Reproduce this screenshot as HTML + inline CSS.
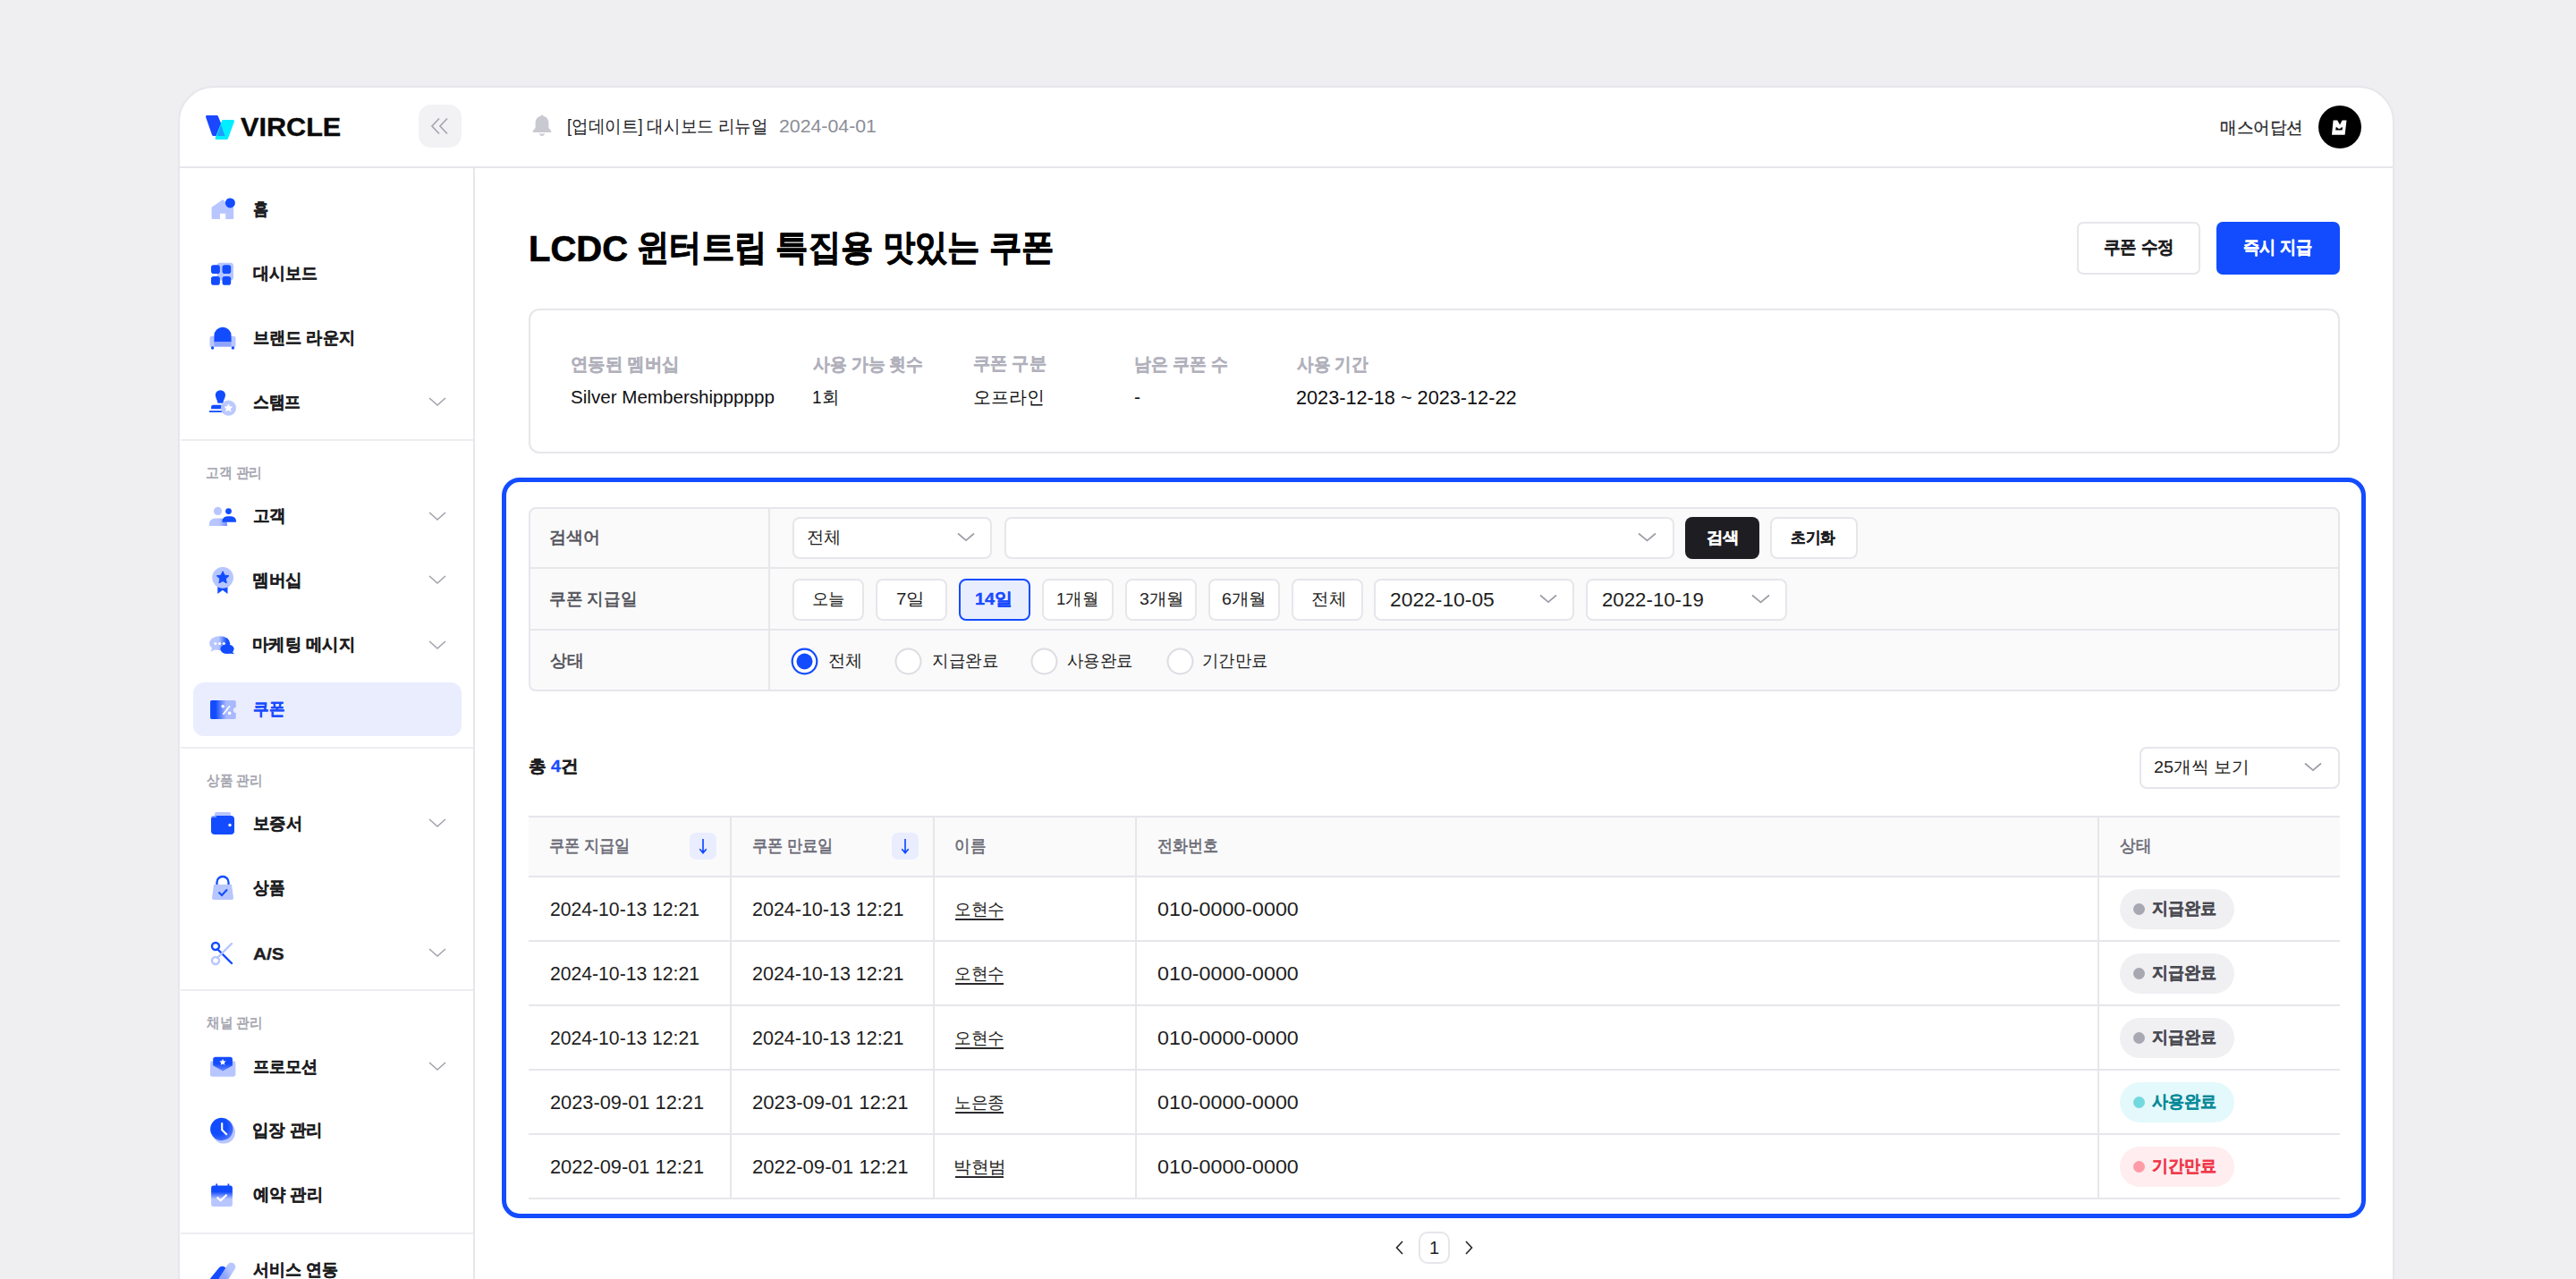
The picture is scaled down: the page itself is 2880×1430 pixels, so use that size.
<!DOCTYPE html>
<html><head><meta charset="utf-8"><title>VIRCLE</title>
<style>
html,body{margin:0;padding:0;}
body{width:2880px;height:1430px;overflow:hidden;position:relative;background:#efeff2;font-family:"Liberation Sans",sans-serif;}
.t{position:absolute;white-space:nowrap;line-height:1;transform-origin:0 0;}
</style></head><body>
<div style="position:absolute;left:199px;top:96px;width:2478px;height:1400px;background:#fff;border:2px solid #e6e6eb;border-radius:40px;box-sizing:border-box"></div>
<div style="position:absolute;left:201px;top:186px;width:2474px;height:2px;background:#e6e6eb"></div>
<div style="position:absolute;left:529px;top:188px;width:2px;height:1300px;background:#e6e6eb"></div>
<svg style="position:absolute;left:226px;top:125px" width="40" height="36" viewBox="0 0 40 36"><polygon points="5.5,5.5 16.5,5.5 24.5,25.5 12.5,25.5" fill="#1a47ff" stroke="#1a47ff" stroke-width="3" stroke-linejoin="round"/>
<polygon points="23.5,10.5 34.5,10.5 27.5,29.5 16,29.5" fill="#00eeff" stroke="#00eeff" stroke-width="3" stroke-linejoin="round"/>
<polygon points="21,14.5 25.5,27 16.8,27" fill="#1f9dff"/></svg>
<div style="position:absolute;left:468px;top:117px;width:48px;height:48px;background:#f2f2f5;border-radius:14px"></div>
<svg style="position:absolute;left:480px;top:129px" width="24" height="24" viewBox="0 0 24 24"><path d="M11 3.5 L3 12 L11 20.5 M20 3.5 L12 12 L20 20.5" fill="none" stroke="#a6a6b1" stroke-width="1.7"/></svg>
<svg style="position:absolute;left:593px;top:126px" width="26" height="29" viewBox="0 0 26 29"><g transform="translate(1 0.5) scale(1.0 1.02)"><path d="M12 2c-.9 0-1.4.6-1.5 1.3C6.8 4.2 4.6 7.2 4.6 11v5.2L1.9 19.3c-.6.7-.1 1.9.9 1.9h18.4c1 0 1.5-1.2.9-1.9L19.4 16.2V11c0-3.8-2.2-6.8-5.9-7.7C13.4 2.6 12.9 2 12 2z" fill="#c9c9d2"/><path d="M8.8 22.6c.5 1.5 1.7 2.4 3.2 2.4s2.7-.9 3.2-2.4z" fill="#c9c9d2"/></g></svg>
<div style="position:absolute;left:2592px;top:118px;width:48px;height:48px;background:#000;border-radius:50%"></div>
<svg style="position:absolute;left:2606px;top:133px" width="20" height="20" viewBox="0 0 20 20"><path d="M2.6 1.5 L7.2 1.5 L10 6.5 L12.6 1.5 L17.5 1.5 L15.6 17.8 L1 17.8 Z" fill="#fff"/><path d="M5.6 9.2 L6.6 9.2 Q9.3 12.6 12 9.2 L13 9.2 L12.6 12.6 L5.2 12.6 Z" fill="#000"/></svg>
<div style="position:absolute;left:202px;top:491px;width:327px;height:2px;background:#ededf1"></div>
<div style="position:absolute;left:202px;top:835px;width:327px;height:2px;background:#ededf1"></div>
<div style="position:absolute;left:202px;top:1106px;width:327px;height:2px;background:#ededf1"></div>
<div style="position:absolute;left:202px;top:1378px;width:327px;height:2px;background:#ededf1"></div>
<div style="position:absolute;left:216px;top:763px;width:300px;height:60px;background:#e9edfe;border-radius:12px"></div>
<svg style="position:absolute;left:478px;top:442px" width="22" height="14" viewBox="0 0 22 14"><path d="M2 3 L11 11 L20 3" fill="none" stroke="#a3a3ae" stroke-width="1.6"/></svg>
<svg style="position:absolute;left:478px;top:569.5px" width="22" height="14" viewBox="0 0 22 14"><path d="M2 3 L11 11 L20 3" fill="none" stroke="#a3a3ae" stroke-width="1.6"/></svg>
<svg style="position:absolute;left:478px;top:641px" width="22" height="14" viewBox="0 0 22 14"><path d="M2 3 L11 11 L20 3" fill="none" stroke="#a3a3ae" stroke-width="1.6"/></svg>
<svg style="position:absolute;left:478px;top:713.5px" width="22" height="14" viewBox="0 0 22 14"><path d="M2 3 L11 11 L20 3" fill="none" stroke="#a3a3ae" stroke-width="1.6"/></svg>
<svg style="position:absolute;left:478px;top:913px" width="22" height="14" viewBox="0 0 22 14"><path d="M2 3 L11 11 L20 3" fill="none" stroke="#a3a3ae" stroke-width="1.6"/></svg>
<svg style="position:absolute;left:478px;top:1058px" width="22" height="14" viewBox="0 0 22 14"><path d="M2 3 L11 11 L20 3" fill="none" stroke="#a3a3ae" stroke-width="1.6"/></svg>
<svg style="position:absolute;left:478px;top:1185px" width="22" height="14" viewBox="0 0 22 14"><path d="M2 3 L11 11 L20 3" fill="none" stroke="#a3a3ae" stroke-width="1.6"/></svg>
<svg style="position:absolute;left:234px;top:219px" width="30" height="30" viewBox="0 0 30 30"><path d="M2.6 12.8 L14.9 4.2 L27.2 12.8 V25 a1 1 0 0 1 -1 1 H18.2 V19.7 H11.9 V26 H3.6 a1 1 0 0 1 -1 -1Z" fill="#b8c6ff"/><circle cx="23.4" cy="7.9" r="5.5" fill="#134cff"/></svg>
<svg style="position:absolute;left:234px;top:292px" width="30" height="30" viewBox="0 0 30 30"><rect x="8.5" y="1.7" width="18.5" height="19.8" rx="3.5" fill="#b8c6ff"/><rect x="2" y="4.3" width="9.9" height="9.7" rx="2.8" fill="#134cff"/><rect x="14.5" y="4.3" width="9.7" height="9.7" rx="2.8" fill="#134cff"/><rect x="2" y="16.9" width="9.9" height="9.8" rx="2.8" fill="#134cff"/><rect x="14.5" y="16.9" width="9.7" height="9.8" rx="2.8" fill="#134cff"/></svg>
<svg style="position:absolute;left:234px;top:364px" width="30" height="30" viewBox="0 0 30 30"><rect x="0.5" y="11.7" width="6" height="12.5" rx="2.5" fill="#b8c6ff"/><rect x="23.5" y="11.7" width="6" height="12.5" rx="2.5" fill="#b8c6ff"/><path d="M5.4 11.4 a9.6 9.6 0 0 1 19.2 0 V18.5 H5.4Z" fill="#134cff"/><rect x="5.5" y="18.2" width="19" height="5.5" fill="#8ea4ff"/><circle cx="3.6" cy="25" r="1.7" fill="#134cff"/><circle cx="26.4" cy="25" r="1.7" fill="#134cff"/></svg>
<svg style="position:absolute;left:234px;top:435px" width="30" height="30" viewBox="0 0 30 30"><path d="M12.4 1.2 a5.6 5.6 0 0 1 5.6 5.6 c0 3 -2.2 5 -2.6 9 H9.4 c-.4 -4 -2.6 -6 -2.6 -9 a5.6 5.6 0 0 1 5.6 -5.6z" fill="#134cff"/><path d="M4.5 17.7 H17 V22.3 H2.1 V20 a2.3 2.3 0 0 1 2.4 -2.3z" fill="#134cff"/><rect x="-0.2" y="24.2" width="16" height="1.8" fill="#134cff"/><circle cx="21.4" cy="21.2" r="8.6" fill="#b8c6ff" opacity="0.95"/><path d="M21.4 16.2 l1.5 3.1 3.4 .4 -2.5 2.3 .7 3.4 -3.1-1.7 -3.1 1.7 .7-3.4 -2.5-2.3 3.4-.4z" fill="#fff"/></svg>
<svg style="position:absolute;left:234px;top:562px" width="30" height="30" viewBox="0 0 30 30"><defs><linearGradient id="pg" x1="0" x2="1"><stop offset="0.55" stop-color="#b8c6ff"/><stop offset="1" stop-color="#6f8bff"/></linearGradient></defs><circle cx="9.5" cy="9.4" r="4.6" fill="#b8c6ff"/><path d="M-0.1 26 V24 a6.6 6.6 0 0 1 6.6 -6.6 H13.4 a6.6 6.6 0 0 1 6.6 6.6 V26Z" fill="url(#pg)"/><circle cx="21.5" cy="9.6" r="3.4" fill="#134cff"/><path d="M14.5 21.7 V20.5 a5.3 5.3 0 0 1 5.3 -5.3 H24.7 a5.3 5.3 0 0 1 5.3 5.3 V21.7Z" fill="#134cff"/></svg>
<svg style="position:absolute;left:234px;top:634px" width="30" height="30" viewBox="0 0 30 30"><path d="M9.3 20 H20.5 V30 L14.9 25.8 L9.3 30Z" fill="#134cff"/><circle cx="15.1" cy="11.8" r="11.9" fill="#b8c6ff"/><path d="M15.1 4.8 l2.1 4.4 4.7 .6 -3.5 3.3 .9 4.8 -4.2-2.3 -4.2 2.3 .9-4.8 -3.5-3.3 4.7-.6z" fill="#134cff" stroke="#134cff" stroke-width="1" stroke-linejoin="round"/></svg>
<svg style="position:absolute;left:234px;top:706px" width="30" height="30" viewBox="0 0 30 30"><defs><linearGradient id="mg" x1="0" x2="1"><stop offset="0.45" stop-color="#b8c6ff"/><stop offset="0.85" stop-color="#134cff"/></linearGradient></defs><path d="M1.5 22.5 L3.5 17.5 L8 20Z" fill="#b8c6ff"/><ellipse cx="11.7" cy="13.2" rx="11.5" ry="8" fill="url(#mg)"/><ellipse cx="20" cy="19.6" rx="7.6" ry="5.4" fill="#134cff"/><path d="M25 22 L28 25.3 L22 24.5Z" fill="#134cff"/><circle cx="6.8" cy="13.5" r="1.5" fill="#fff"/><circle cx="11.6" cy="13.5" r="1.5" fill="#fff"/><circle cx="16.3" cy="13.5" r="1.5" fill="#fff"/></svg>
<svg style="position:absolute;left:234px;top:779px" width="30" height="30" viewBox="0 0 30 30"><defs><linearGradient id="cg" x1="0" x2="1"><stop offset="0.2" stop-color="#134cff"/><stop offset="0.62" stop-color="#a9b9ff"/></linearGradient></defs><path d="M3.2 4.1 H27.8 a2 2 0 0 1 2 2 V12 a3 3 0 0 0 0 6 V23 a2 2 0 0 1 -2 2 H3.2 a2 2 0 0 1 -2 -2 V6.1 a2 2 0 0 1 2 -2Z" fill="url(#cg)"/><rect x="1.2" y="4.1" width="6.1" height="20.9" rx="2" fill="#134cff"/><path d="M15.8 19.2 L22.6 10.8" stroke="#fff" stroke-width="1.7" stroke-linecap="round"/><circle cx="15.2" cy="10.7" r="1.8" fill="#fff"/><circle cx="22.6" cy="18.4" r="1.8" fill="#fff"/></svg>
<svg style="position:absolute;left:234px;top:906px" width="30" height="30" viewBox="0 0 30 30"><rect x="6" y="2" width="18" height="8" rx="2" fill="#b8c6ff"/><rect x="2" y="6" width="26" height="21" rx="4" fill="#134cff"/><rect x="2" y="6" width="6" height="2" fill="#b8c6ff" opacity="0.6"/><circle cx="23" cy="16.5" r="1.7" fill="#fff"/></svg>
<svg style="position:absolute;left:234px;top:978px" width="30" height="30" viewBox="0 0 30 30"><path d="M8.5 13 V8.5 a6.5 6.5 0 0 1 13 0 V13" fill="none" stroke="#134cff" stroke-width="2.3"/><path d="M5 11 H25 L27 26 a2 2 0 0 1 -2 2 H5 a2 2 0 0 1 -2 -2Z" fill="#b8c6ff"/><path d="M10.5 19.5 L14 23 L20 16.5" fill="none" stroke="#134cff" stroke-width="2.1"/></svg>
<svg style="position:absolute;left:234px;top:1051px" width="30" height="30" viewBox="0 0 30 30"><path d="M9 10 L25 26" stroke="#134cff" stroke-width="2.4" stroke-linecap="round"/><path d="M9 20 L25 4" stroke="#b8c6ff" stroke-width="2.4" stroke-linecap="round"/><circle cx="7" cy="7" r="4" fill="none" stroke="#134cff" stroke-width="2.4"/><circle cx="7" cy="23" r="4" fill="none" stroke="#b8c6ff" stroke-width="2.4"/></svg>
<svg style="position:absolute;left:234px;top:1178px" width="30" height="30" viewBox="0 0 30 30"><defs><linearGradient id="eg" x1="0" y1="0" x2="0" y2="1"><stop offset="0.45" stop-color="#134cff"/><stop offset="1" stop-color="#7d95ff"/></linearGradient></defs><rect x="1.1" y="8.3" width="28.1" height="17.2" rx="2" fill="#b8c6ff"/><rect x="4.2" y="3.8" width="21.7" height="17" rx="2.5" fill="url(#eg)"/><path d="M1.1 11.5 L15.15 19.5 L29.2 11.5 V23.5 a2 2 0 0 1 -2 2 H3.1 a2 2 0 0 1 -2 -2Z" fill="#b8c6ff"/><path d="M15 6 l1.1 2.3 2.5 .3 -1.8 1.7 .5 2.5 -2.3-1.3 -2.3 1.3 .5-2.5 -1.8-1.7 2.5-.3z" fill="#fff"/></svg>
<svg style="position:absolute;left:234px;top:1249px" width="30" height="30" viewBox="0 0 30 30"><defs><radialGradient id="kg" cx="0.35" cy="0.35" r="0.8"><stop offset="0.5" stop-color="#134cff"/><stop offset="1" stop-color="#5f7fff"/></radialGradient></defs><circle cx="16.3" cy="16.9" r="12.7" fill="#b8c6ff"/><circle cx="13.8" cy="13.5" r="12.7" fill="url(#kg)"/><path d="M14.2 7 V14.2 L19.2 19.2" fill="none" stroke="#fff" stroke-width="2.1" stroke-linecap="round"/></svg>
<svg style="position:absolute;left:234px;top:1321px" width="30" height="30" viewBox="0 0 30 30"><defs><linearGradient id="lg" x1="0" y1="0" x2="0" y2="1"><stop offset="0.3" stop-color="#134cff"/><stop offset="0.65" stop-color="#b8c6ff"/></linearGradient></defs><rect x="2.1" y="4.5" width="23.8" height="23.4" rx="2.5" fill="url(#lg)"/><rect x="7.3" y="2.5" width="1.8" height="4" fill="#134cff"/><rect x="20.5" y="2.5" width="1.8" height="4" fill="#134cff"/><path d="M8.6 17.5 L12.6 21.2 L19.6 14.8" fill="none" stroke="#fff" stroke-width="2.2"/></svg>
<svg style="position:absolute;left:234px;top:1405px" width="30" height="30" viewBox="0 0 30 30"><defs><linearGradient id="sg" x1="0" y1="1" x2="1" y2="0"><stop offset="0.2" stop-color="#8da3ff"/><stop offset="0.8" stop-color="#b8c6ff"/></linearGradient></defs><path d="M5.5 26.5 L14.5 15.5" stroke="#134cff" stroke-width="9.5" stroke-linecap="round"/><path d="M15.5 25.5 L24.5 11.5" stroke="url(#sg)" stroke-width="9.5" stroke-linecap="round"/></svg>
<div style="position:absolute;left:2322px;top:248px;width:138px;height:59px;background:#fff;border:2px solid #e6e6eb;border-radius:7px;box-sizing:border-box"></div>
<div style="position:absolute;left:2478px;top:248px;width:138px;height:59px;background:#134cff;border-radius:7px"></div>
<div style="position:absolute;left:591px;top:345px;width:2025px;height:162px;border:2px solid #e6e6eb;border-radius:12px;box-sizing:border-box"></div>
<div style="position:absolute;left:561px;top:534px;width:2084px;height:828px;border:5px solid #134cff;border-radius:20px;box-sizing:border-box"></div>
<div style="position:absolute;left:591px;top:567px;width:2025px;height:206px;background:#fafafb;border:2px solid #e6e6eb;border-radius:8px;box-sizing:border-box"></div>
<div style="position:absolute;left:593px;top:634px;width:2021px;height:2px;background:#e6e6eb"></div>
<div style="position:absolute;left:593px;top:703px;width:2021px;height:2px;background:#e6e6eb"></div>
<div style="position:absolute;left:859px;top:569px;width:2px;height:202px;background:#e6e6eb"></div>
<div style="position:absolute;left:886px;top:578px;width:223px;height:47px;background:#fff;border:2px solid #e6e6eb;border-radius:8px;box-sizing:border-box"></div>
<div style="position:absolute;left:1123px;top:578px;width:749px;height:47px;background:#fff;border:2px solid #e6e6eb;border-radius:8px;box-sizing:border-box"></div>
<div style="position:absolute;left:1884px;top:578px;width:83px;height:47px;background:#1e1e22;border-radius:8px"></div>
<div style="position:absolute;left:1979px;top:578px;width:98px;height:47px;background:#fff;border:2px solid #e6e6eb;border-radius:8px;box-sizing:border-box"></div>
<div style="position:absolute;left:886px;top:647px;width:80px;height:47px;background:#fff;border:2px solid #e6e6eb;border-radius:8px;box-sizing:border-box"></div>
<div style="position:absolute;left:979px;top:647px;width:80px;height:47px;background:#fff;border:2px solid #e6e6eb;border-radius:8px;box-sizing:border-box"></div>
<div style="position:absolute;left:1072px;top:647px;width:80px;height:47px;background:#e9eefe;border:2px solid #134cff;border-radius:8px;box-sizing:border-box"></div>
<div style="position:absolute;left:1165px;top:647px;width:80px;height:47px;background:#fff;border:2px solid #e6e6eb;border-radius:8px;box-sizing:border-box"></div>
<div style="position:absolute;left:1258px;top:647px;width:80px;height:47px;background:#fff;border:2px solid #e6e6eb;border-radius:8px;box-sizing:border-box"></div>
<div style="position:absolute;left:1351px;top:647px;width:80px;height:47px;background:#fff;border:2px solid #e6e6eb;border-radius:8px;box-sizing:border-box"></div>
<div style="position:absolute;left:1444px;top:647px;width:80px;height:47px;background:#fff;border:2px solid #e6e6eb;border-radius:8px;box-sizing:border-box"></div>
<div style="position:absolute;left:1536px;top:647px;width:224px;height:47px;background:#fff;border:2px solid #e6e6eb;border-radius:8px;box-sizing:border-box"></div>
<div style="position:absolute;left:1773px;top:647px;width:225px;height:47px;background:#fff;border:2px solid #e6e6eb;border-radius:8px;box-sizing:border-box"></div>
<svg style="position:absolute;left:1070px;top:594px" width="20" height="14" viewBox="0 0 20 14"><path d="M1 2.5 L10.0 10.059999999999999 L19 2.5" fill="none" stroke="#9d9da8" stroke-width="1.7"/></svg>
<svg style="position:absolute;left:1831px;top:594px" width="21" height="14" viewBox="0 0 21 14"><path d="M1 2.5 L10.5 10.48 L20 2.5" fill="none" stroke="#9d9da8" stroke-width="1.7"/></svg>
<svg style="position:absolute;left:1721px;top:663px" width="20" height="14" viewBox="0 0 20 14"><path d="M1 2.5 L10.0 10.059999999999999 L19 2.5" fill="none" stroke="#9d9da8" stroke-width="1.7"/></svg>
<svg style="position:absolute;left:1957.5px;top:663px" width="21" height="14" viewBox="0 0 21 14"><path d="M1 2.5 L10.5 10.48 L20 2.5" fill="none" stroke="#9d9da8" stroke-width="1.7"/></svg>
<svg style="position:absolute;left:884px;top:724px" width="31" height="31" viewBox="0 0 31 31"><circle cx="15.5" cy="15.5" r="13.8" fill="#fff" stroke="#134cff" stroke-width="2.2"/><circle cx="15.5" cy="15.5" r="9" fill="#134cff"/></svg>
<svg style="position:absolute;left:1000px;top:724px" width="31" height="31" viewBox="0 0 31 31"><circle cx="15.5" cy="15.5" r="14" fill="#fff" stroke="#dcdce2" stroke-width="2"/></svg>
<svg style="position:absolute;left:1152px;top:724px" width="31" height="31" viewBox="0 0 31 31"><circle cx="15.5" cy="15.5" r="14" fill="#fff" stroke="#dcdce2" stroke-width="2"/></svg>
<svg style="position:absolute;left:1303.5px;top:724px" width="31" height="31" viewBox="0 0 31 31"><circle cx="15.5" cy="15.5" r="14" fill="#fff" stroke="#dcdce2" stroke-width="2"/></svg>
<div style="position:absolute;left:2392px;top:835px;width:224px;height:47px;background:#fff;border:2px solid #e6e6eb;border-radius:8px;box-sizing:border-box"></div>
<svg style="position:absolute;left:2576px;top:851px" width="20" height="14" viewBox="0 0 20 14"><path d="M1 2.5 L10.0 10.059999999999999 L19 2.5" fill="none" stroke="#9d9da8" stroke-width="1.7"/></svg>
<div style="position:absolute;left:591px;top:913px;width:2025px;height:67px;background:#fafafb"></div>
<div style="position:absolute;left:591px;top:912px;width:2025px;height:2px;background:#e6e6eb"></div>
<div style="position:absolute;left:591px;top:979px;width:2025px;height:2px;background:#e6e6eb"></div>
<div style="position:absolute;left:591px;top:1051px;width:2025px;height:2px;background:#e6e6eb"></div>
<div style="position:absolute;left:591px;top:1123px;width:2025px;height:2px;background:#e6e6eb"></div>
<div style="position:absolute;left:591px;top:1195px;width:2025px;height:2px;background:#e6e6eb"></div>
<div style="position:absolute;left:591px;top:1267px;width:2025px;height:2px;background:#e6e6eb"></div>
<div style="position:absolute;left:591px;top:1339px;width:2025px;height:2px;background:#e6e6eb"></div>
<div style="position:absolute;left:815.5px;top:914px;width:2px;height:426px;background:#e6e6eb"></div>
<div style="position:absolute;left:1042.5px;top:914px;width:2px;height:426px;background:#e6e6eb"></div>
<div style="position:absolute;left:1269px;top:914px;width:2px;height:426px;background:#e6e6eb"></div>
<div style="position:absolute;left:2344.5px;top:914px;width:2px;height:426px;background:#e6e6eb"></div>
<div style="position:absolute;left:771px;top:931px;width:30px;height:30px;background:#e9edfe;border-radius:7px"></div>
<svg style="position:absolute;left:771px;top:931px" width="30" height="30" viewBox="0 0 30 30"><path d="M15 7 V22.5 M11.3 18.3 L15 22.6 L18.7 18.3" fill="none" stroke="#134cff" stroke-width="1.7"/></svg>
<div style="position:absolute;left:997px;top:931px;width:30px;height:30px;background:#e9edfe;border-radius:7px"></div>
<svg style="position:absolute;left:997px;top:931px" width="30" height="30" viewBox="0 0 30 30"><path d="M15 7 V22.5 M11.3 18.3 L15 22.6 L18.7 18.3" fill="none" stroke="#134cff" stroke-width="1.7"/></svg>
<div style="position:absolute;left:2370px;top:994px;width:128px;height:45px;background:#f0f0f3;border-radius:23px"></div>
<div style="position:absolute;left:2384.5px;top:1010px;width:13px;height:13px;background:#a8a8b2;border-radius:50%"></div>
<div style="position:absolute;left:1068px;top:1027px;width:54px;height:2px;background:#2a2a2e"></div>
<div style="position:absolute;left:2370px;top:1066px;width:128px;height:45px;background:#f0f0f3;border-radius:23px"></div>
<div style="position:absolute;left:2384.5px;top:1082px;width:13px;height:13px;background:#a8a8b2;border-radius:50%"></div>
<div style="position:absolute;left:1068px;top:1099px;width:54px;height:2px;background:#2a2a2e"></div>
<div style="position:absolute;left:2370px;top:1138px;width:128px;height:45px;background:#f0f0f3;border-radius:23px"></div>
<div style="position:absolute;left:2384.5px;top:1154px;width:13px;height:13px;background:#a8a8b2;border-radius:50%"></div>
<div style="position:absolute;left:1068px;top:1171px;width:54px;height:2px;background:#2a2a2e"></div>
<div style="position:absolute;left:2370px;top:1210px;width:128px;height:45px;background:#e4f9fb;border-radius:23px"></div>
<div style="position:absolute;left:2384.5px;top:1226px;width:13px;height:13px;background:#72d9df;border-radius:50%"></div>
<div style="position:absolute;left:1068px;top:1243px;width:54px;height:2px;background:#2a2a2e"></div>
<div style="position:absolute;left:2370px;top:1282px;width:128px;height:45px;background:#ffedef;border-radius:23px"></div>
<div style="position:absolute;left:2384.5px;top:1298px;width:13px;height:13px;background:#ff9ba6;border-radius:50%"></div>
<div style="position:absolute;left:1068px;top:1315px;width:54px;height:2px;background:#2a2a2e"></div>
<svg style="position:absolute;left:1557px;top:1385px" width="16" height="20" viewBox="0 0 16 20"><path d="M11 3 L4.5 10 L11 17" fill="none" stroke="#26262a" stroke-width="1.6"/></svg>
<svg style="position:absolute;left:1635px;top:1385px" width="16" height="20" viewBox="0 0 16 20"><path d="M4 3 L10.5 10 L4 17" fill="none" stroke="#26262a" stroke-width="1.6"/></svg>
<div style="position:absolute;left:1586px;top:1377px;width:35px;height:36px;border:2px solid #e6e6eb;border-radius:10px;box-sizing:border-box"></div>
<div class="t" style="left:268.7px;top:128.2px;font-size:29.0px;font-weight:700;transform:scaleX(1.0557);color:#0a0a0a;-webkit-text-stroke:0.35px currentColor">VIRCLE</div>
<div class="t" style="left:633.7px;top:131.7px;font-size:19.5px;font-weight:400;transform:scaleX(0.9293);color:#222226;">[업데이트] 대시보드 리뉴얼</div>
<div class="t" style="left:870.9px;top:131.2px;font-size:20.0px;font-weight:400;transform:scaleX(1.0644);color:#8c8c97;">2024-04-01</div>
<div class="t" style="left:2482.0px;top:134.0px;font-size:18.5px;font-weight:400;transform:scaleX(0.9783);color:#2a2a2e;-webkit-text-stroke:0.3px currentColor">매스어답션</div>
<div class="t" style="left:282.5px;top:224.5px;font-size:18.5px;font-weight:700;transform:scaleX(0.9);color:#1e1e22;-webkit-text-stroke:0.35px currentColor">홈</div>
<div class="t" style="left:282.5px;top:297.0px;font-size:18.5px;font-weight:700;transform:scaleX(0.9434);color:#1e1e22;-webkit-text-stroke:0.35px currentColor">대시보드</div>
<div class="t" style="left:282.5px;top:369.0px;font-size:18.5px;font-weight:700;transform:scaleX(0.9564);color:#1e1e22;-webkit-text-stroke:0.35px currentColor">브랜드 라운지</div>
<div class="t" style="left:282.5px;top:440.5px;font-size:18.5px;font-weight:700;transform:scaleX(0.9333);color:#1e1e22;-webkit-text-stroke:0.35px currentColor">스탬프</div>
<div class="t" style="left:282.5px;top:568.0px;font-size:18.5px;font-weight:700;transform:scaleX(0.9722);color:#1e1e22;-webkit-text-stroke:0.35px currentColor">고객</div>
<div class="t" style="left:281.5px;top:639.5px;font-size:18.5px;font-weight:700;transform:scaleX(0.9815);color:#1e1e22;-webkit-text-stroke:0.35px currentColor">멤버십</div>
<div class="t" style="left:281.5px;top:712.0px;font-size:18.5px;font-weight:700;transform:scaleX(0.9655);color:#1e1e22;-webkit-text-stroke:0.35px currentColor">마케팅 메시지</div>
<div class="t" style="left:282.5px;top:911.5px;font-size:18.5px;font-weight:700;transform:scaleX(0.9655);color:#1e1e22;-webkit-text-stroke:0.35px currentColor">보증서</div>
<div class="t" style="left:282.5px;top:983.5px;font-size:18.5px;font-weight:700;transform:scaleX(0.9237);color:#1e1e22;-webkit-text-stroke:0.35px currentColor">상품</div>
<div class="t" style="left:281.5px;top:1254.5px;font-size:18.5px;font-weight:700;transform:scaleX(0.9731);color:#1e1e22;-webkit-text-stroke:0.35px currentColor">입장 관리</div>
<div class="t" style="left:282.5px;top:1326.5px;font-size:18.5px;font-weight:700;transform:scaleX(0.9608);color:#1e1e22;-webkit-text-stroke:0.35px currentColor">예약 관리</div>
<div class="t" style="left:282.5px;top:1184.0px;font-size:18.5px;font-weight:700;transform:scaleX(0.9533);color:#1e1e22;-webkit-text-stroke:0.35px currentColor">프로모션</div>
<div class="t" style="left:282.5px;top:1410.5px;font-size:18.5px;font-weight:700;transform:scaleX(0.945);color:#1e1e22;-webkit-text-stroke:0.35px currentColor">서비스 연동</div>
<div class="t" style="left:282.5px;top:1056.5px;font-size:19.0px;font-weight:700;transform:scaleX(1.0969);color:#1e1e22;-webkit-text-stroke:0.35px currentColor">A/S</div>
<div class="t" style="left:282.5px;top:784.2px;font-size:18.5px;font-weight:700;transform:scaleX(0.9211);color:#1a4bff;-webkit-text-stroke:0.35px currentColor">쿠폰</div>
<div class="t" style="left:230.1px;top:521.0px;font-size:15.5px;font-weight:400;transform:scaleX(0.9231);color:#a4a4af;-webkit-text-stroke:0.6px currentColor">고객 관리</div>
<div class="t" style="left:231.0px;top:865.0px;font-size:15.5px;font-weight:400;transform:scaleX(0.9091);color:#a4a4af;-webkit-text-stroke:0.6px currentColor">상품 관리</div>
<div class="t" style="left:231.0px;top:1136.4px;font-size:15.5px;font-weight:400;transform:scaleX(0.9091);color:#a4a4af;-webkit-text-stroke:0.6px currentColor">채널 관리</div>
<div class="t" style="left:591.3px;top:257.7px;font-size:41.0px;font-weight:700;transform:scaleX(0.9748);color:#000000;-webkit-text-stroke:0.7px currentColor">LCDC</div>
<div class="t" style="left:712.1px;top:255.7px;font-size:40.0px;font-weight:700;transform:scaleX(0.9086);color:#000000;-webkit-text-stroke:0.7px currentColor">윈터트립 특집용 맛있는 쿠폰</div>
<div class="t" style="left:2351.7px;top:267.2px;font-size:19.5px;font-weight:700;transform:scaleX(0.9232);color:#1e1e22;-webkit-text-stroke:0.35px currentColor">쿠폰 수정</div>
<div class="t" style="left:2507.5px;top:267.2px;font-size:19.5px;font-weight:700;transform:scaleX(0.9095);color:#ffffff;-webkit-text-stroke:0.35px currentColor">즉시 지급</div>
<div class="t" style="left:638.4px;top:397.7px;font-size:19.5px;font-weight:700;transform:scaleX(0.9705);color:#b1b1bc;-webkit-text-stroke:0.35px currentColor">연동된 멤버십</div>
<div class="t" style="left:909.2px;top:397.7px;font-size:19.5px;font-weight:700;transform:scaleX(0.9412);color:#b1b1bc;-webkit-text-stroke:0.35px currentColor">사용 가능 횟수</div>
<div class="t" style="left:1088.0px;top:397.2px;font-size:19.5px;font-weight:700;transform:scaleX(0.956);color:#b1b1bc;-webkit-text-stroke:0.35px currentColor">쿠폰 구분</div>
<div class="t" style="left:1268.4px;top:397.7px;font-size:19.5px;font-weight:700;transform:scaleX(0.9418);color:#b1b1bc;-webkit-text-stroke:0.35px currentColor">남은 쿠폰 수</div>
<div class="t" style="left:1449.6px;top:397.7px;font-size:19.5px;font-weight:700;transform:scaleX(0.9267);color:#b1b1bc;-webkit-text-stroke:0.35px currentColor">사용 기간</div>
<div class="t" style="left:638.4px;top:434.3px;font-size:20.0px;font-weight:400;transform:scaleX(1.03);color:#0f0f12;">Silver Membershipppppp</div>
<div class="t" style="left:908.2px;top:434.5px;font-size:19.5px;font-weight:400;transform:scaleX(0.9704);color:#0f0f12;">1회</div>
<div class="t" style="left:1088.0px;top:434.5px;font-size:19.5px;font-weight:400;transform:scaleX(0.9961);color:#0f0f12;">오프라인</div>
<div class="t" style="left:1268.0px;top:432.5px;font-size:21.0px;font-weight:400;transform:scaleX(1.0);color:#0f0f12;">-</div>
<div class="t" style="left:1448.6px;top:433.7px;font-size:22.0px;font-weight:400;transform:scaleX(0.9855);color:#0f0f12;">2023-12-18 ~ 2023-12-22</div>
<div class="t" style="left:613.7px;top:590.5px;font-size:19.0px;font-weight:400;transform:scaleX(1.0019);color:#505058;-webkit-text-stroke:0.6px currentColor">검색어</div>
<div class="t" style="left:613.7px;top:659.5px;font-size:19.0px;font-weight:400;transform:scaleX(0.9784);color:#505058;-webkit-text-stroke:0.6px currentColor">쿠폰 지급일</div>
<div class="t" style="left:614.7px;top:729.0px;font-size:19.0px;font-weight:400;transform:scaleX(0.9944);color:#505058;-webkit-text-stroke:0.6px currentColor">상태</div>
<div class="t" style="left:902.0px;top:590.5px;font-size:19.0px;font-weight:400;transform:scaleX(1.0143);color:#1e1e22;">전체</div>
<div class="t" style="left:1907.5px;top:592.5px;font-size:17.5px;font-weight:700;transform:scaleX(1.0235);color:#ffffff;-webkit-text-stroke:0.35px currentColor">검색</div>
<div class="t" style="left:2002.0px;top:593.0px;font-size:17.5px;font-weight:700;transform:scaleX(0.9273);color:#1e1e22;-webkit-text-stroke:0.35px currentColor">초기화</div>
<div class="t" style="left:907.5px;top:659.5px;font-size:19.0px;font-weight:400;transform:scaleX(0.9639);color:#1e1e22;">오늘</div>
<div class="t" style="left:1002.3px;top:659.5px;font-size:19.0px;font-weight:400;transform:scaleX(1.0815);color:#1e1e22;">7일</div>
<div class="t" style="left:1181.3px;top:659.5px;font-size:19.0px;font-weight:400;transform:scaleX(0.9761);color:#1e1e22;">1개월</div>
<div class="t" style="left:1273.6px;top:659.5px;font-size:19.0px;font-weight:400;transform:scaleX(1.0304);color:#1e1e22;">3개월</div>
<div class="t" style="left:1366.3px;top:659.5px;font-size:19.0px;font-weight:400;transform:scaleX(1.0304);color:#1e1e22;">6개월</div>
<div class="t" style="left:1466.0px;top:659.5px;font-size:19.0px;font-weight:400;transform:scaleX(1.0286);color:#1e1e22;">전체</div>
<div class="t" style="left:1089.9px;top:660.0px;font-size:19.0px;font-weight:700;transform:scaleX(1.0526);color:#1a4bff;-webkit-text-stroke:0.35px currentColor">14일</div>
<div class="t" style="left:1554.0px;top:659.8px;font-size:22.0px;font-weight:400;transform:scaleX(1.0378);color:#1e1e22;">2022-10-05</div>
<div class="t" style="left:1790.8px;top:659.8px;font-size:22.0px;font-weight:400;transform:scaleX(1.0108);color:#1e1e22;">2022-10-19</div>
<div class="t" style="left:925.8px;top:728.5px;font-size:19.0px;font-weight:400;transform:scaleX(1.0114);color:#1e1e22;">전체</div>
<div class="t" style="left:1041.5px;top:728.5px;font-size:19.0px;font-weight:400;transform:scaleX(0.9757);color:#1e1e22;">지급완료</div>
<div class="t" style="left:1193.3px;top:728.5px;font-size:19.0px;font-weight:400;transform:scaleX(0.9716);color:#1e1e22;">사용완료</div>
<div class="t" style="left:1344.4px;top:728.5px;font-size:19.0px;font-weight:400;transform:scaleX(0.9676);color:#1e1e22;">기간만료</div>
<div class="t" style="left:591.0px;top:847.2px;font-size:19.0px;font-weight:700;transform:scaleX(1.034);color:#1e1e22;-webkit-text-stroke:0.35px currentColor">총 <span style='color:#1a4bff'>4</span>건</div>
<div class="t" style="left:2408.3px;top:847.5px;font-size:19.0px;font-weight:400;transform:scaleX(1.0408);color:#1e1e22;">25개씩 보기</div>
<div class="t" style="left:613.8px;top:936.5px;font-size:18.5px;font-weight:400;transform:scaleX(0.9031);color:#6b6b76;-webkit-text-stroke:0.6px currentColor">쿠폰 지급일</div>
<div class="t" style="left:840.9px;top:937.0px;font-size:18.5px;font-weight:400;transform:scaleX(0.9021);color:#6b6b76;-webkit-text-stroke:0.6px currentColor">쿠폰 만료일</div>
<div class="t" style="left:1067.1px;top:936.5px;font-size:18.5px;font-weight:400;transform:scaleX(0.9222);color:#6b6b76;-webkit-text-stroke:0.6px currentColor">이름</div>
<div class="t" style="left:1293.8px;top:937.0px;font-size:18.5px;font-weight:400;transform:scaleX(0.8959);color:#6b6b76;-webkit-text-stroke:0.6px currentColor">전화번호</div>
<div class="t" style="left:2369.8px;top:937.0px;font-size:18.5px;font-weight:400;transform:scaleX(0.9222);color:#6b6b76;-webkit-text-stroke:0.6px currentColor">상태</div>
<div class="t" style="left:614.9px;top:1006.3px;font-size:22.0px;font-weight:400;transform:scaleX(0.9616);color:#1e1e22;">2024-10-13 12:21</div>
<div class="t" style="left:840.8px;top:1006.3px;font-size:22.0px;font-weight:400;transform:scaleX(0.9762);color:#1e1e22;">2024-10-13 12:21</div>
<div class="t" style="left:1067.0px;top:1006.8px;font-size:19.0px;font-weight:400;transform:scaleX(0.9818);color:#1e1e22;">오현수</div>
<div class="t" style="left:1293.6px;top:1006.3px;font-size:22.0px;font-weight:400;transform:scaleX(1.0574);color:#1e1e22;">010-0000-0000</div>
<div class="t" style="left:2406.0px;top:1007.3px;font-size:18.5px;font-weight:700;transform:scaleX(0.9474);color:#4a4a52;-webkit-text-stroke:0.35px currentColor">지급완료</div>
<div class="t" style="left:614.9px;top:1078.3px;font-size:22.0px;font-weight:400;transform:scaleX(0.9616);color:#1e1e22;">2024-10-13 12:21</div>
<div class="t" style="left:840.8px;top:1078.3px;font-size:22.0px;font-weight:400;transform:scaleX(0.9762);color:#1e1e22;">2024-10-13 12:21</div>
<div class="t" style="left:1067.0px;top:1078.8px;font-size:19.0px;font-weight:400;transform:scaleX(0.9818);color:#1e1e22;">오현수</div>
<div class="t" style="left:1293.6px;top:1078.3px;font-size:22.0px;font-weight:400;transform:scaleX(1.0574);color:#1e1e22;">010-0000-0000</div>
<div class="t" style="left:2406.0px;top:1079.3px;font-size:18.5px;font-weight:700;transform:scaleX(0.9474);color:#4a4a52;-webkit-text-stroke:0.35px currentColor">지급완료</div>
<div class="t" style="left:614.9px;top:1150.3px;font-size:22.0px;font-weight:400;transform:scaleX(0.9616);color:#1e1e22;">2024-10-13 12:21</div>
<div class="t" style="left:840.8px;top:1150.3px;font-size:22.0px;font-weight:400;transform:scaleX(0.9762);color:#1e1e22;">2024-10-13 12:21</div>
<div class="t" style="left:1067.0px;top:1150.8px;font-size:19.0px;font-weight:400;transform:scaleX(0.9818);color:#1e1e22;">오현수</div>
<div class="t" style="left:1293.6px;top:1150.3px;font-size:22.0px;font-weight:400;transform:scaleX(1.0574);color:#1e1e22;">010-0000-0000</div>
<div class="t" style="left:2406.0px;top:1151.3px;font-size:18.5px;font-weight:700;transform:scaleX(0.9474);color:#4a4a52;-webkit-text-stroke:0.35px currentColor">지급완료</div>
<div class="t" style="left:614.9px;top:1222.3px;font-size:22.0px;font-weight:400;transform:scaleX(0.9907);color:#1e1e22;">2023-09-01 12:21</div>
<div class="t" style="left:840.8px;top:1222.3px;font-size:22.0px;font-weight:400;transform:scaleX(1.0052);color:#1e1e22;">2023-09-01 12:21</div>
<div class="t" style="left:1067.0px;top:1222.8px;font-size:19.0px;font-weight:400;transform:scaleX(0.9818);color:#1e1e22;">노은종</div>
<div class="t" style="left:1293.6px;top:1222.3px;font-size:22.0px;font-weight:400;transform:scaleX(1.0574);color:#1e1e22;">010-0000-0000</div>
<div class="t" style="left:2406.0px;top:1223.3px;font-size:18.5px;font-weight:700;transform:scaleX(0.9474);color:#0a8a99;-webkit-text-stroke:0.35px currentColor">사용완료</div>
<div class="t" style="left:614.9px;top:1294.3px;font-size:22.0px;font-weight:400;transform:scaleX(0.9907);color:#1e1e22;">2022-09-01 12:21</div>
<div class="t" style="left:840.8px;top:1294.3px;font-size:22.0px;font-weight:400;transform:scaleX(1.0052);color:#1e1e22;">2022-09-01 12:21</div>
<div class="t" style="left:1065.9px;top:1294.8px;font-size:19.0px;font-weight:400;transform:scaleX(1.0385);color:#1e1e22;">박현범</div>
<div class="t" style="left:1293.6px;top:1294.3px;font-size:22.0px;font-weight:400;transform:scaleX(1.0574);color:#1e1e22;">010-0000-0000</div>
<div class="t" style="left:2406.0px;top:1295.3px;font-size:18.5px;font-weight:700;transform:scaleX(0.9474);color:#f0384a;-webkit-text-stroke:0.35px currentColor">기간만료</div>
<div class="t" style="left:1598.0px;top:1385.0px;font-size:20.0px;font-weight:400;transform:scaleX(1.0);color:#1e1e22;">1</div>
</body></html>
